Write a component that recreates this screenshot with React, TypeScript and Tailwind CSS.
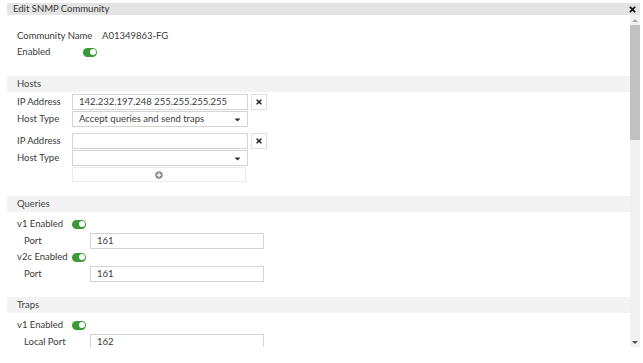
import React from 'react';
import { FaTimes, FaCaretDown, FaPlusCircle } from 'react-icons/fa';

const font = { fontFamily: 'Lato, "Open Sans", sans-serif' };

const Toggle = () => (
  <span className="inline-flex h-[9px] w-[14px] items-center justify-end rounded-full bg-[#3a9a35] pr-[1.5px]">
    <span className="h-[6px] w-[6px] rounded-full bg-white" />
  </span>
);

const SectionBar = ({ title }: { title: string }) => (
  <div className="flex h-[16px] items-center bg-[#f3f3f3] pl-[10px] text-[#444]">{title}</div>
);

const TextBox = ({ value, width }: { value?: string; width: string }) => (
  <div className={`flex h-[16px] items-center border border-[#d4d4d4] bg-white pl-[6px] ${width}`}>
    {value}
  </div>
);

const SelectBox = ({ value }: { value?: string }) => (
  <div className="flex h-[16px] w-[176px] items-center justify-between border border-[#d4d4d4] bg-white pl-[6px] pr-[5px]">
    <span>{value}</span>
    <FaCaretDown className="h-[9px] w-[9px] text-[#333]" />
  </div>
);

const RemoveButton = () => (
  <div className="ml-[3px] flex h-[16px] w-[16px] items-center justify-center border border-[#e2e2e2] bg-white">
    <FaTimes className="h-[8px] w-[8px] text-[#222]" />
  </div>
);

const HostRows = ({ ip, type }: { ip?: string; type?: string }) => (
  <>
    <div className="flex h-[16px] items-center">
      <span className="w-[55px]">IP Address</span>
      <TextBox value={ip} width="w-[176px]" />
      <RemoveButton />
    </div>
    <div className="mt-[1px] flex h-[16px] items-center">
      <span className="w-[55px]">Host Type</span>
      <SelectBox value={type} />
    </div>
  </>
);

const EnabledRow = ({ label, className }: { label: string; className?: string }) => (
  <div className={`flex h-[16px] items-center ${className ?? ''}`}>
    <span className="min-w-[55px] whitespace-nowrap pr-[3px]">{label}</span>
    <Toggle />
  </div>
);

const PortRow = ({ label, value, className }: { label: string; value: string; className?: string }) => (
  <div className={`flex h-[16px] items-center ${className ?? ''}`}>
    <span className="w-[73px] pl-[7px]">{label}</span>
    <TextBox value={value} width="w-[174px]" />
  </div>
);

export default function App() {
  return (
    <div className="h-[363px] w-[643px] overflow-hidden bg-white pl-[7px] pr-[3px] pt-[3px] text-[9.5px] text-[#3a3a3a]" style={font}>
      {/* Title bar */}
      <div className="flex h-[12px] items-center justify-between bg-[#e4e4e4] pl-[6px] pr-[3px]">
        <span className="text-[#333]">Edit SNMP Community</span>
        <FaTimes className="h-[9px] w-[9px] text-[#111]" />
      </div>

      <div className="flex h-[332px]">
        {/* Scrollable body */}
        <div className="flex-1 overflow-hidden">
          <div className="pl-[10px] pt-[13px]">
            <div className="flex h-[16px] items-center">
              <span className="w-[85px]">Community Name</span>
              <span>A01349863-FG</span>
            </div>
            <div className="flex h-[16px] items-center">
              <span className="w-[66px]">Enabled</span>
              <Toggle />
            </div>
          </div>

          <div className="mt-[16px]">
            <SectionBar title="Hosts" />
            <div className="pl-[10px] pt-[2px]">
              <HostRows ip="142.232.197.248 255.255.255.255" type="Accept queries and send traps" />
              <div className="mt-[6px]">
                <HostRows />
              </div>
              <div className="ml-[55px] mt-[1px] flex h-[15px] w-[174px] items-center justify-center border border-[#ebebeb]">
                <FaPlusCircle className="h-[8px] w-[8px] text-[#8a8a8a]" />
              </div>
            </div>
          </div>

          <div className="mt-[14px]">
            <SectionBar title="Queries" />
            <div className="pl-[10px] pt-[4px]">
              <EnabledRow label="v1 Enabled" />
              <PortRow label="Port" value="161" className="mt-[1px]" />
              <EnabledRow label="v2c Enabled" />
              <PortRow label="Port" value="161" className="mt-[1px]" />
            </div>
          </div>

          <div className="mt-[15px]">
            <SectionBar title="Traps" />
            <div className="pl-[10px] pt-[4px]">
              <EnabledRow label="v1 Enabled" />
              <PortRow label="Local Port" value="162" className="mt-[1px]" />
            </div>
          </div>
        </div>

        {/* Scrollbar */}
        <div className="flex w-[10px] flex-col items-center bg-[#f1f1f1]">
          <div className="flex h-[10px] items-center justify-center">
            <span className="h-0 w-0 border-x-[3px] border-b-[3px] border-x-transparent border-b-[#a8a8a8]" />
          </div>
          <div className="h-[115px] w-full bg-[#c1c1c1]" />
          <div className="flex-1" />
          <div className="flex h-[10px] items-center justify-center">
            <span className="h-0 w-0 border-x-[3px] border-t-[3px] border-x-transparent border-t-[#505050]" />
          </div>
        </div>
      </div>
    </div>
  );
}
